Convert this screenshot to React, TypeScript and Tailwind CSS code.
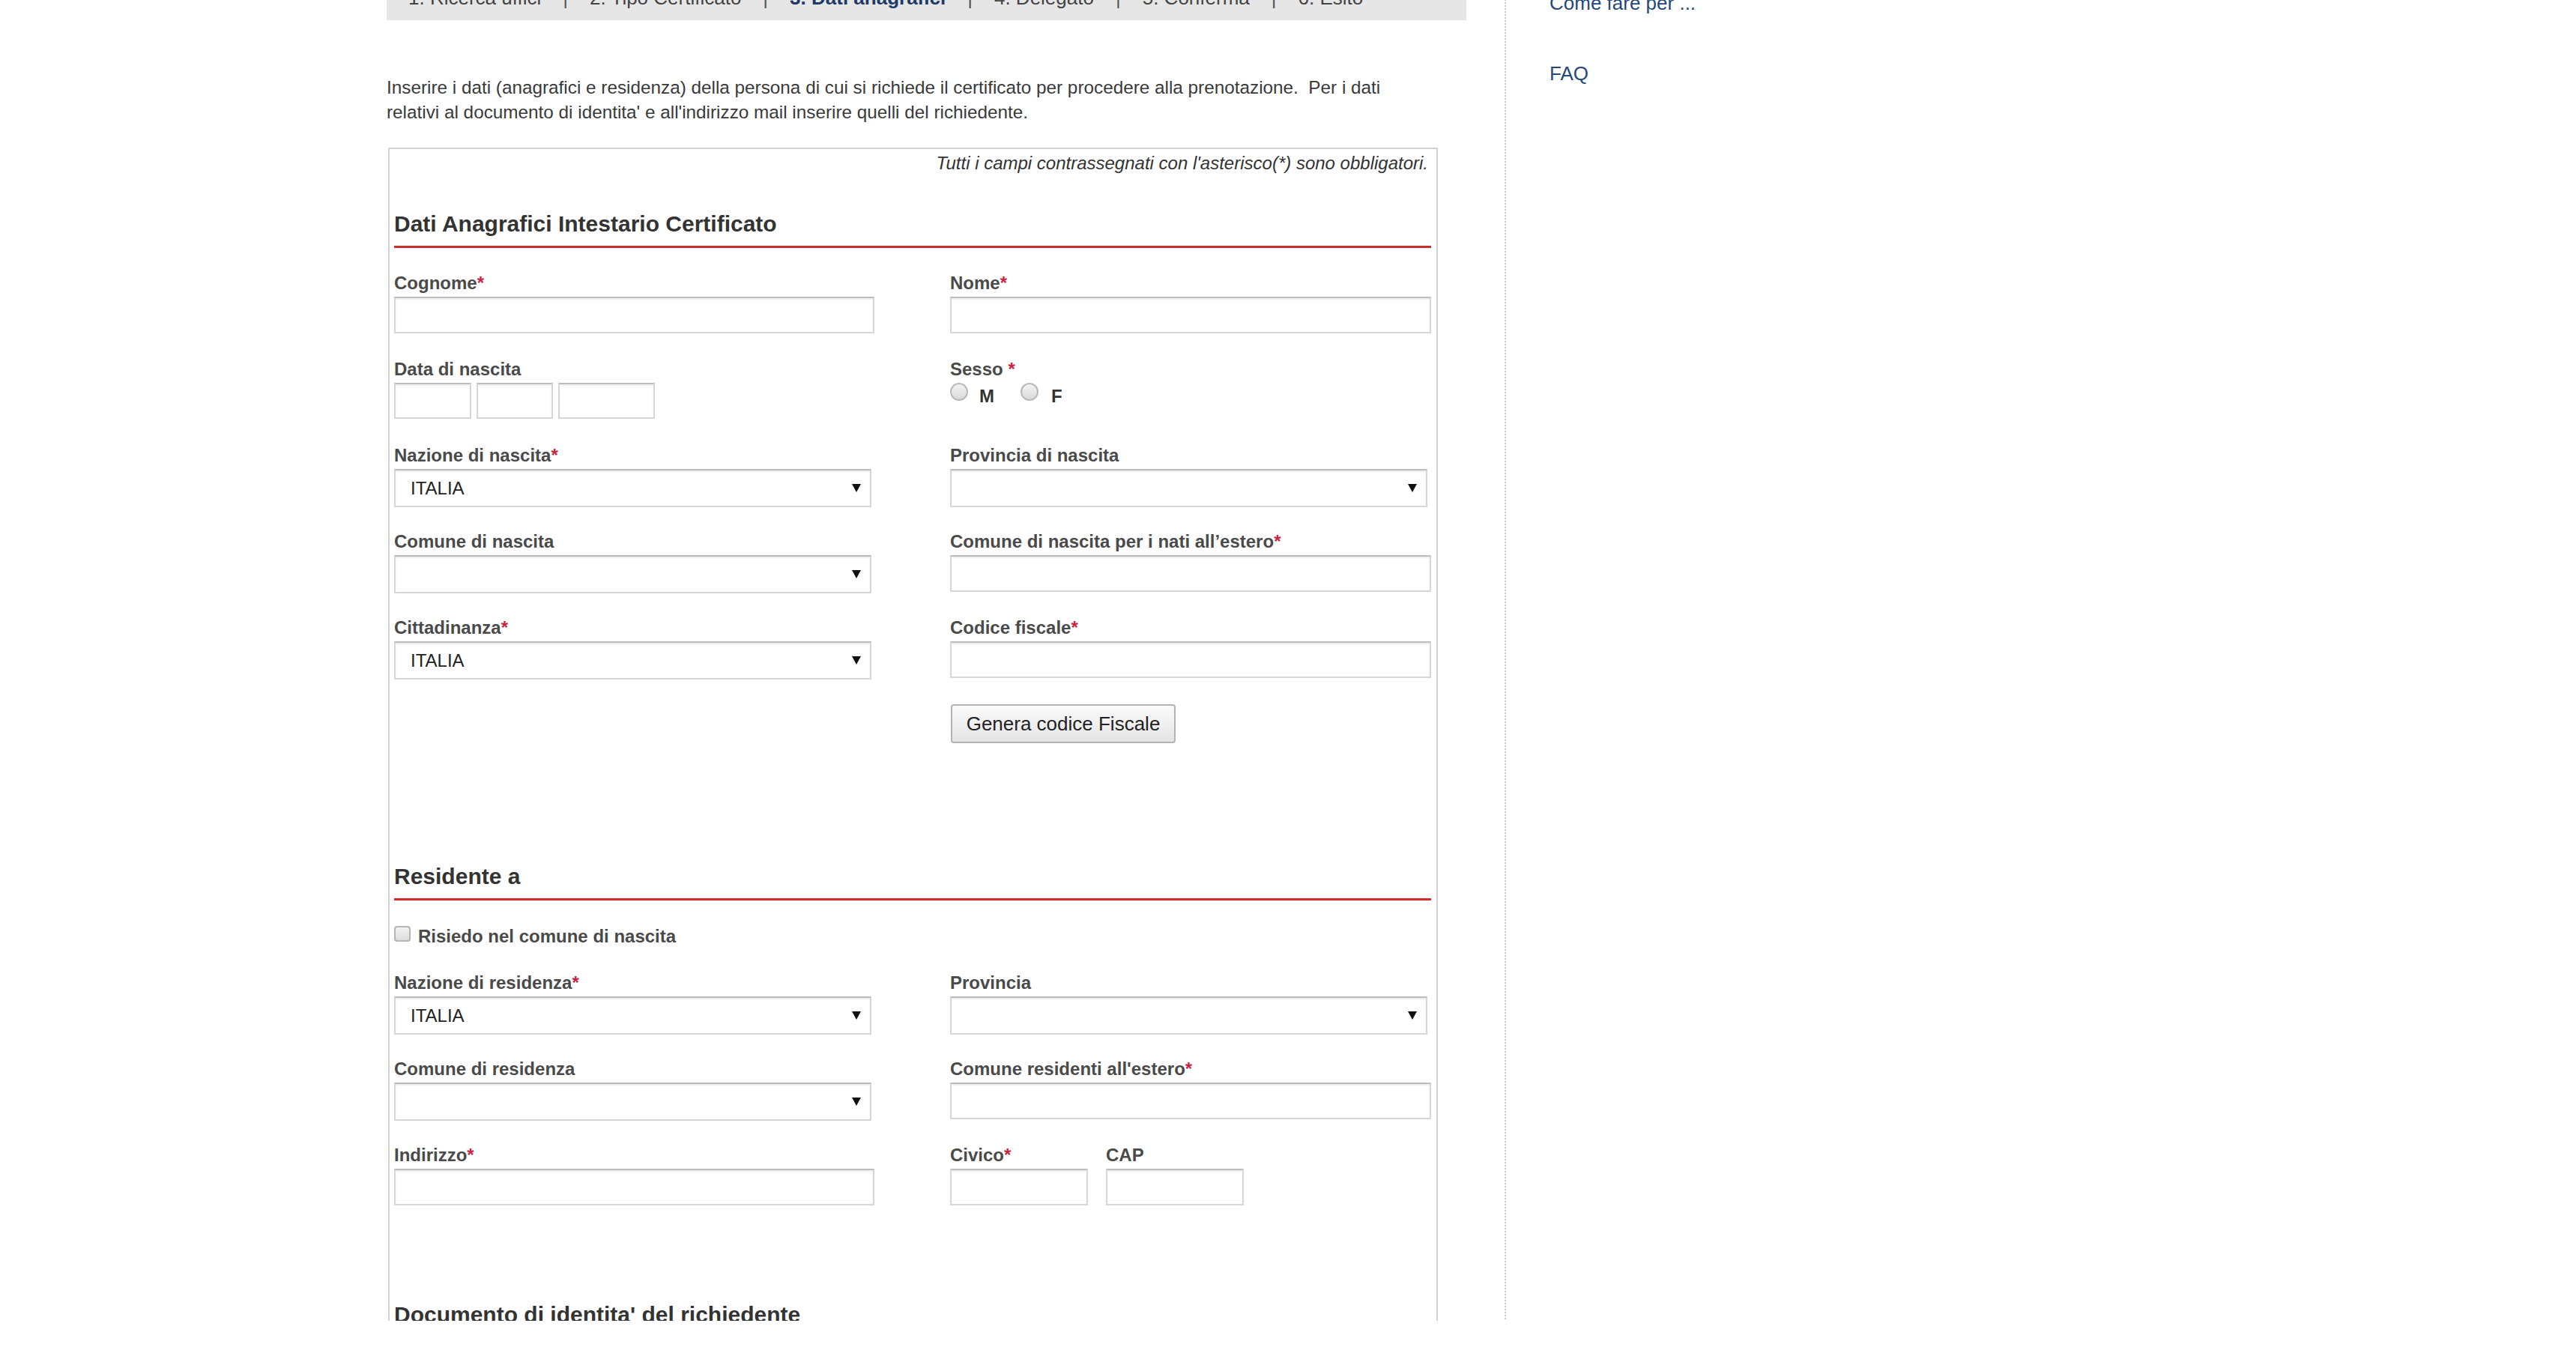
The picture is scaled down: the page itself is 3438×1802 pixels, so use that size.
import React from "react";

const Req = () => <span className="text-[#c8243f]">*</span>;

const Label = ({ children, req }: { children: React.ReactNode; req?: boolean }) => (
  <div className="mb-[5px] h-[26px] whitespace-nowrap text-[24px] font-bold leading-[26px] text-[#4a4a4a]">
    {children}
    {req && <Req />}
  </div>
);

const box =
  "box-border border-2 border-[#d6d6d6] border-t-[#bcbcbc] bg-white shadow-[inset_0_2px_2px_rgba(0,0,0,0.07)]";

const TextBox = ({ w }: { w: string }) => <div className={`${box} h-[49px] ${w}`} />;

const Select = ({ value, w }: { value?: string; w: string }) => (
  <div className={`${box} flex h-[51px] items-center justify-between pl-[20px] pr-[12px] text-[24px] text-[#222] ${w}`}>
    <span>{value}</span>
    <svg width="12" height="11" viewBox="0 0 12 11">
      <polygon points="0,0 12,0 6,11" fill="#111" />
    </svg>
  </div>
);

const Radio = () => (
  <span className="box-border h-[24px] w-[24px] rounded-full border-2 border-[#b9b9b9] bg-linear-to-b from-[#f4f4f4] to-[#d9d9d9]" />
);

const SectionTitle = ({ children, className }: { children: React.ReactNode; className: string }) => (
  <h2 className={`border-b-[3px] border-[#c9302c] pb-[12px] text-[30px] font-bold leading-[34px] text-[#333] ${className}`}>
    {children}
  </h2>
);

const Row = ({ children }: { children: React.ReactNode }) => (
  <div className="grid h-[115px] grid-cols-[641px_642px] gap-x-[101px]">{children}</div>
);

const steps = [
  "1. Ricerca uffici",
  "2. Tipo Certificato",
  "3. Dati anagrafici",
  "4. Delegato",
  "5. Conferma",
  "6. Esito",
];

export default function App() {
  return (
    <div className="h-[1763px] w-full overflow-hidden bg-white font-['Liberation_Sans',Arial,sans-serif] text-[#333]">
      <div className="-mt-[33px] flex pl-[516px]">
        <main className="w-[1441px] shrink-0">
          {/* step bar */}
          <nav className="flex h-[60px] items-center bg-[#e6e6e6] pl-[29px] text-[26px] text-[#444]">
            {steps.map((s, i) => (
              <React.Fragment key={s}>
                {i > 0 && <span className="px-[29px] text-[#555]">|</span>}
                <span className={i === 2 ? "font-bold text-[#1d3a6b]" : ""}>{s}</span>
              </React.Fragment>
            ))}
          </nav>

          <p className="mt-[73px] text-[24.3px] leading-[33px] text-[#3a3a3a]">
            Inserire i dati (anagrafici e residenza) della persona di cui si richiede il certificato per procedere alla
            prenotazione.&nbsp; Per i dati
            <br />
            relativi al documento di identita' e all'indirizzo mail inserire quelli del richiedente.
          </p>

          <form className="ml-[2px] mt-[31px] box-border w-[1401px] border-2 border-[#d2d2d2] pb-[300px] pl-[6px] pr-[7px]">
            <div className="pr-[4px] pt-[7px] text-right text-[24px] italic leading-[24px] text-[#333]">
              Tutti i campi contrassegnati con l'asterisco(*) sono obbligatori.
            </div>

            <SectionTitle className="mt-[52px]">Dati Anagrafici Intestario Certificato</SectionTitle>

            <div className="mt-[34px]">
              <Row>
                <div>
                  <Label req>Cognome</Label>
                  <TextBox w="w-[641px]" />
                </div>
                <div>
                  <Label req>Nome</Label>
                  <TextBox w="w-[642px]" />
                </div>
              </Row>
              <Row>
                <div>
                  <Label>Data di nascita</Label>
                  <div className="flex gap-[7px]">
                    <div className={`${box} h-[48px] w-[103px]`} />
                    <div className={`${box} h-[48px] w-[102px]`} />
                    <div className={`${box} h-[48px] w-[129px]`} />
                  </div>
                </div>
                <div>
                  <Label>
                    Sesso <Req />
                  </Label>
                  <div className="flex h-[24px] items-center text-[24px] font-bold text-[#333]">
                    <Radio />
                    <span className="ml-[15px] mt-[12px]">M</span>
                    <span className="ml-[35px] flex">
                      <Radio />
                    </span>
                    <span className="ml-[17px] mt-[12px]">F</span>
                  </div>
                </div>
              </Row>
              <Row>
                <div>
                  <Label req>Nazione di nascita</Label>
                  <Select value="ITALIA" w="w-[637px]" />
                </div>
                <div>
                  <Label>Provincia di nascita</Label>
                  <Select w="w-[637px]" />
                </div>
              </Row>
              <Row>
                <div>
                  <Label>Comune di nascita</Label>
                  <Select w="w-[637px]" />
                </div>
                <div>
                  <Label req>Comune di nascita per i nati all’estero</Label>
                  <TextBox w="w-[642px]" />
                </div>
              </Row>
              <Row>
                <div>
                  <Label req>Cittadinanza</Label>
                  <Select value="ITALIA" w="w-[637px]" />
                </div>
                <div>
                  <Label req>Codice fiscale</Label>
                  <TextBox w="w-[642px]" />
                </div>
              </Row>
              <div className="grid grid-cols-[641px_642px] gap-x-[101px]">
                <div />
                <div>
                  <button
                    type="button"
                    className="ml-[1px] box-border h-[52px] w-[300px] rounded-[4px] border-2 border-[#b3b3b3] bg-linear-to-b from-[#fbfbfb] to-[#e4e4e4] text-[26px] text-[#222]"
                  >
                    Genera codice Fiscale
                  </button>
                </div>
              </div>
            </div>

            <SectionTitle className="mt-[161px]">Residente a</SectionTitle>

            <div className="mt-[35px] flex h-[26px] items-center text-[24px] font-bold leading-[26px] text-[#4a4a4a]">
              <span className="-mt-[8px] box-border h-[21px] w-[22px] rounded-[4px] border-2 border-[#b5b5b5] bg-linear-to-b from-[#f4f4f4] to-[#dcdcdc]" />
              <span className="ml-[10px]">Risiedo nel comune di nascita</span>
            </div>

            <div className="mt-[36px]">
              <Row>
                <div>
                  <Label req>Nazione di residenza</Label>
                  <Select value="ITALIA" w="w-[637px]" />
                </div>
                <div>
                  <Label>Provincia</Label>
                  <Select w="w-[637px]" />
                </div>
              </Row>
              <Row>
                <div>
                  <Label>Comune di residenza</Label>
                  <Select w="w-[637px]" />
                </div>
                <div>
                  <Label req>Comune residenti all'estero</Label>
                  <TextBox w="w-[642px]" />
                </div>
              </Row>
              <Row>
                <div>
                  <Label req>Indirizzo</Label>
                  <TextBox w="w-[641px]" />
                </div>
                <div className="flex gap-[24px]">
                  <div>
                    <Label req>Civico</Label>
                    <TextBox w="w-[184px]" />
                  </div>
                  <div>
                    <Label>CAP</Label>
                    <TextBox w="w-[184px]" />
                  </div>
                </div>
              </Row>
            </div>

            <SectionTitle className="mt-[94px]">Documento di identita' del richiedente</SectionTitle>
          </form>
        </main>

        {/* sidebar */}
        <aside className="ml-[51px] border-l-2 border-dotted border-[#c6c6c6] pl-[58px] pt-[22px] text-[26px] leading-[30px] text-[#24487a]">
          <div>Come fare per ...</div>
          <div className="mt-[64px]">FAQ</div>
        </aside>
      </div>
    </div>
  );
}
